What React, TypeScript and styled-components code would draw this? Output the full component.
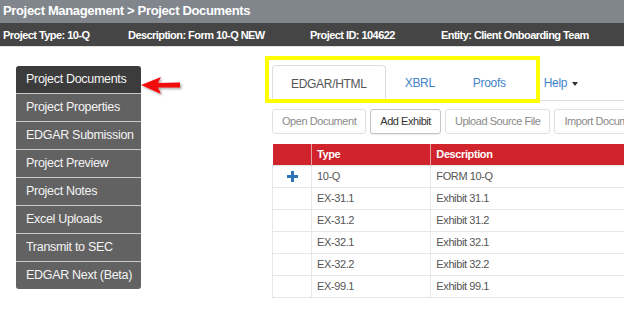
import React from "react";
import styled, { createGlobalStyle } from "styled-components";

const GlobalStyle = createGlobalStyle`
  html, body {
    margin: 0;
    padding: 0;
    overflow: hidden;
    background: #fff;
    font-family: "Liberation Sans", Arial, sans-serif;
  }
`;

const sideItems = [
  "Project Documents",
  "Project Properties",
  "EDGAR Submission",
  "Project Preview",
  "Project Notes",
  "Excel Uploads",
  "Transmit to SEC",
  "EDGAR Next (Beta)",
];

const rows = [
  { type: "10-Q", desc: "FORM 10-Q", main: true },
  { type: "EX-31.1", desc: "Exhibit 31.1" },
  { type: "EX-31.2", desc: "Exhibit 31.2" },
  { type: "EX-32.1", desc: "Exhibit 32.1" },
  { type: "EX-32.2", desc: "Exhibit 32.2" },
  { type: "EX-99.1", desc: "Exhibit 99.1" },
];

function Arrow() {
  return (
    <svg width="48" height="26" viewBox="0 0 48 26">
      <defs>
        <filter id="sh" x="-20%" y="-30%" width="150%" height="180%">
          <feDropShadow dx="1.5" dy="1.5" stdDeviation="1.2" floodColor="#000" floodOpacity="0.35" />
        </filter>
      </defs>
      <path
        d="M2 11 L22 3 L19 9 L41 8.5 L41 13.5 L19 13.5 L22 20 Z"
        fill="#f20d0d"
        filter="url(#sh)"
      />
    </svg>
  );
}

function PlusIcon() {
  return (
    <svg width="11" height="11" viewBox="0 0 11 11" style={{ display: "block", margin: "0 auto" }}>
      <rect x="4" y="0" width="3" height="11" fill="#2f72b8" />
      <rect x="0" y="4" width="11" height="3" fill="#2f72b8" />
    </svg>
  );
}

export default function App() {
  return (
    <Page>
      <GlobalStyle />
      <TitleBar>Project Management &gt; Project Documents</TitleBar>
      <InfoBar>
        <span>Project Type: 10-Q</span>
        <span>Description: Form 10-Q NEW</span>
        <span>Project ID: 104622</span>
        <span>Entity: Client Onboarding Team</span>
      </InfoBar>
      <Main>
        <SideWrap>
          <SideNav>
            {sideItems.map((label, i) => (
              <SideItem key={label} $active={i === 0}>
                {label}
              </SideItem>
            ))}
          </SideNav>
          <ArrowMark>
            <Arrow />
          </ArrowMark>
        </SideWrap>
        <Content>
          <TabBar>
            <Tab $active>EDGAR/HTML</Tab>
            <Tab>XBRL</Tab>
            <Tab>Proofs</Tab>
            <Tab>
              Help <Caret />
            </Tab>
            <Highlight />
          </TabBar>
          <Toolbar>
            <ToolButton>Open Document</ToolButton>
            <ToolButton $enabled>Add Exhibit</ToolButton>
            <ToolButton>Upload Source File</ToolButton>
            <ToolButton>Import Document</ToolButton>
          </Toolbar>
          <Table>
            <thead>
              <tr>
                <HeadCell $w={39}></HeadCell>
                <HeadCell $w={119}>Type</HeadCell>
                <HeadCell $w={260}>Description</HeadCell>
              </tr>
            </thead>
            <tbody>
              {rows.map((r) => (
                <tr key={r.type}>
                  <IconCell>{r.main && <PlusIcon />}</IconCell>
                  <Cell>{r.type}</Cell>
                  <Cell>{r.desc}</Cell>
                </tr>
              ))}
            </tbody>
          </Table>
        </Content>
      </Main>
    </Page>
  );
}

const Page = styled.div`
  width: 624px;
  height: 320px;
  overflow: hidden;
`;

const TitleBar = styled.div`
  height: 23px;
  line-height: 22px;
  padding-left: 3px;
  background: #80868c;
  color: #fff;
  font-size: 13px;
  font-weight: bold;
  letter-spacing: -0.35px;
`;

const InfoBar = styled.div`
  height: 23px;
  display: grid;
  grid-template-columns: 125px 182px 131px auto;
  align-items: center;
  padding-left: 3px;
  background: #454545;
  color: #fff;
  font-size: 11px;
  font-weight: bold;
  letter-spacing: -0.55px;
  border-bottom: 1px solid #e0e0e0;
`;

const Main = styled.div`
  display: flex;
  align-items: flex-start;
  padding: 18px 0 0 16px;
  gap: 131px;
`;

const SideWrap = styled.div`
  position: relative;
  margin-top: 1px;
`;

const SideNav = styled.div`
  width: 125px;
  border-radius: 3px;
  overflow: hidden;
  display: flex;
  flex-direction: column;
  background: #c8c8c8;
  gap: 1px;
`;

const SideItem = styled.div<{ $active?: boolean }>`
  height: 27px;
  line-height: 26px;
  padding-left: 10px;
  background: ${(p) => (p.$active ? "#3c3c3c" : "#626262")};
  color: #f4f4f4;
  font-size: 12.5px;
  letter-spacing: -0.3px;
  white-space: nowrap;
`;

const ArrowMark = styled.div`
  position: absolute;
  left: 123px;
  top: 8px;
  line-height: 0;
`;

const Content = styled.div`
  width: 420px;
  flex-shrink: 0;
`;

const TabBar = styled.div`
  position: relative;
  display: flex;
  height: 35px;
  border-bottom: 1px solid #dddddd;
`;

const Tab = styled.div<{ $active?: boolean }>`
  display: flex;
  align-items: center;
  gap: 5px;
  padding: 0 18px;
  box-sizing: border-box;
  font-size: 12px;
  letter-spacing: -0.3px;
  color: ${(p) => (p.$active ? "#555" : "#3f84c8")};
  background: #fff;
  border: 1px solid ${(p) => (p.$active ? "#dddddd" : "transparent")};
  border-bottom: none;
  border-radius: 4px 4px 0 0;
  margin-bottom: ${(p) => (p.$active ? "-1px" : "0")};
  height: ${(p) => (p.$active ? "36px" : "35px")};
`;

const Caret = styled.span`
  display: inline-block;
  width: 0;
  height: 0;
  border-left: 3.5px solid transparent;
  border-right: 3.5px solid transparent;
  border-top: 4px solid #333;
  margin-top: 1px;
`;

const Highlight = styled.div`
  position: absolute;
  left: -7px;
  top: -9px;
  width: 267px;
  height: 39px;
  border: 4px solid #ffff00;
  pointer-events: none;
`;

const Toolbar = styled.div`
  display: flex;
  gap: 4px;
  margin-top: 8px;
  white-space: nowrap;
`;

const ToolButton = styled.div<{ $enabled?: boolean }>`
  flex-shrink: 0;
  height: 25px;
  box-sizing: border-box;
  line-height: 23px;
  padding: 0 9px;
  font-size: 11px;
  letter-spacing: -0.45px;
  color: ${(p) => (p.$enabled ? "#333" : "#8a8a8a")};
  border: 1px solid ${(p) => (p.$enabled ? "#c4c4c4" : "#e0e0e0")};
  border-radius: 3px;
  background: #fff;
  box-shadow: ${(p) => (p.$enabled ? "0 1px 1px rgba(0,0,0,0.08)" : "none")};
`;

const Table = styled.table`
  margin-top: 10px;
  border-collapse: collapse;
  table-layout: fixed;
  width: 420px;
  font-size: 11px;
  letter-spacing: -0.4px;
`;

const HeadCell = styled.th<{ $w: number }>`
  width: ${(p) => p.$w}px;
  height: 21px;
  padding: 0 0 0 5px;
  box-sizing: border-box;
  text-align: left;
  background: #d0232b;
  color: #fff;
  font-weight: bold;
  border-right: 1px solid #e9a0a3;
`;

const Cell = styled.td`
  height: 21px;
  padding: 0 0 0 5px;
  color: #555;
  border: 1px solid #e6e6e6;
`;

const IconCell = styled(Cell)`
  padding: 0;
  vertical-align: middle;
`;
